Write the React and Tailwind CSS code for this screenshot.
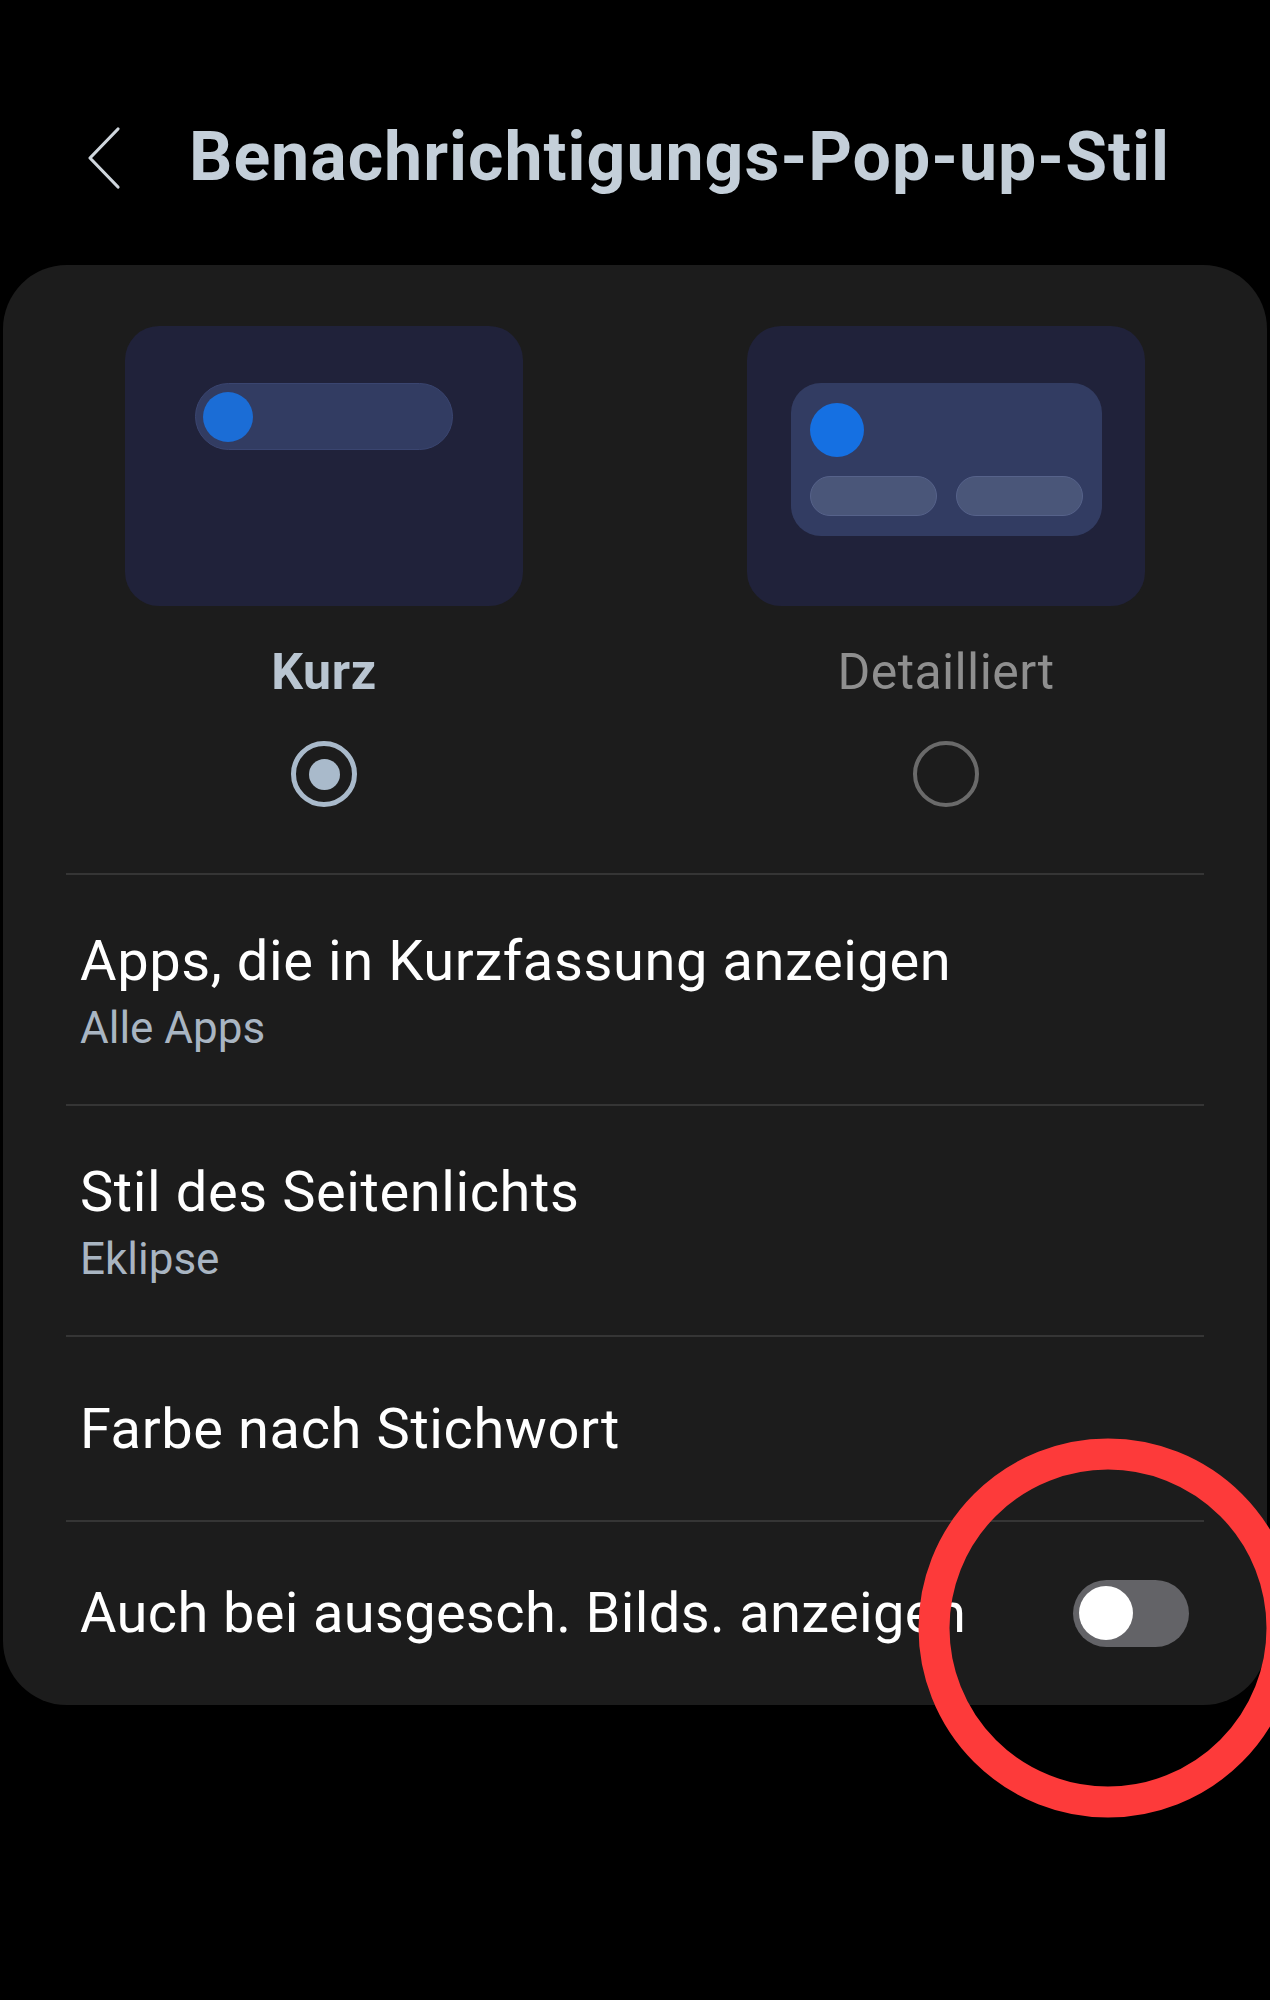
export default function App() {
  const font = { fontFamily: "Roboto, 'Noto Sans', sans-serif" };
  return (
    <div className="relative w-[1270px] h-[2000px] overflow-hidden bg-black" style={font}>
      {/* Header */}
      <div className="h-[265px] flex items-start pt-[121px] pl-[87px]">
        <svg width="34" height="64" viewBox="0 0 34 64" className="mt-[5px] shrink-0">
          <polyline points="31,3 3,32 31,61" fill="none" stroke="#cfd6dd" strokeWidth="3.2" strokeLinecap="round" strokeLinejoin="round" />
        </svg>
        <h1 className="ml-[68px] text-[68px] leading-[72px] font-bold text-[#c4cfd9] tracking-[1px] whitespace-nowrap">
          Benachrichtigungs-Pop-up-Stil
        </h1>
      </div>

      {/* Card */}
      <div className="mx-[3px] h-[1440px] rounded-[64px] bg-[#1c1c1c] flex flex-col">
        {/* Previews */}
        <div className="flex px-[122px] pt-[61px] gap-[224px]">
          <div className="w-[398px] flex flex-col items-center">
            <div className="w-[398px] h-[280px] rounded-[34px] bg-[#20223a] pl-[70px] pt-[57px]">
              <div className="w-[258px] h-[67px] rounded-full bg-[#323c62] border border-[#3a4570] flex items-center pl-[7px]">
                <div className="w-[50px] h-[50px] rounded-full bg-[#1b6dd6]" />
              </div>
            </div>
            <div className="mt-[37px] text-[50px] leading-[58px] font-bold tracking-[0.6px] text-[#b9c5d1]">Kurz</div>
            <div className="mt-[40px] w-[66px] h-[66px] rounded-full border-[5px] border-[#a9bacb] flex items-center justify-center">
              <div className="w-[31px] h-[31px] rounded-full bg-[#a9bacb]" />
            </div>
          </div>
          <div className="w-[398px] flex flex-col items-center">
            <div className="w-[398px] h-[280px] rounded-[34px] bg-[#20223a] pl-[44px] pt-[57px]">
              <div className="w-[311px] h-[153px] rounded-[30px] bg-[#323c62] pl-[19px] pt-[20px]">
                <div className="w-[54px] h-[54px] rounded-full bg-[#1570e2]" />
                <div className="mt-[19px] flex gap-[19px]">
                  <div className="w-[127px] h-[40px] rounded-full bg-[#4a5679] border border-[#56628a]" />
                  <div className="w-[127px] h-[40px] rounded-full bg-[#4a5679] border border-[#56628a]" />
                </div>
              </div>
            </div>
            <div className="mt-[37px] text-[50px] leading-[58px] font-normal tracking-[0.4px] text-[#8f8f8f]">Detailliert</div>
            <div className="mt-[40px] w-[66px] h-[66px] rounded-full border-[4px] border-[#6a6a6a]" />
          </div>
        </div>

        {/* Divider */}
        <div className="mt-[66px] mx-[63px] h-[2px] bg-[#353535]" />

        {/* Row 1 */}
        <div className="px-[77px] pt-[52px] pb-[50px]">
          <div className="text-[56px] leading-[68px] tracking-[0.6px] text-white">Apps, die in Kurzfassung anzeigen</div>
          <div className="mt-[7px] text-[44px] leading-[52px] text-[#a9b5c2]">Alle Apps</div>
        </div>
        <div className="mx-[63px] h-[2px] bg-[#353535]" />

        {/* Row 2 */}
        <div className="px-[77px] pt-[52px] pb-[50px]">
          <div className="text-[56px] leading-[68px] tracking-[0.6px] text-white">Stil des Seitenlichts</div>
          <div className="mt-[7px] text-[44px] leading-[52px] text-[#a9b5c2]">Eklipse</div>
        </div>
        <div className="mx-[63px] h-[2px] bg-[#353535]" />

        {/* Row 3 */}
        <div className="px-[77px] h-[183px] flex items-center">
          <div className="text-[56px] leading-[68px] tracking-[0.6px] text-white">Farbe nach Stichwort</div>
        </div>
        <div className="mx-[63px] h-[2px] bg-[#353535]" />

        {/* Row 4 */}
        <div className="pl-[77px] pr-[78px] h-[182px] flex items-center justify-between">
          <div className="text-[56px] leading-[68px] tracking-[0.35px] text-white whitespace-nowrap">Auch bei ausgesch. Bilds. anzeigen</div>
          <div className="w-[116px] h-[67px] rounded-full bg-[#636367] flex items-center pl-[6px] shrink-0">
            <div className="w-[54px] h-[54px] rounded-full bg-white" />
          </div>
        </div>
      </div>

      {/* Red annotation circle */}
      <svg className="absolute left-[900px] top-[1420px]" width="420" height="420" viewBox="0 0 420 420">
        <ellipse cx="208" cy="208" rx="174" ry="174" fill="none" stroke="#fd3a3a" strokeWidth="31" />
      </svg>
    </div>
  );
}
